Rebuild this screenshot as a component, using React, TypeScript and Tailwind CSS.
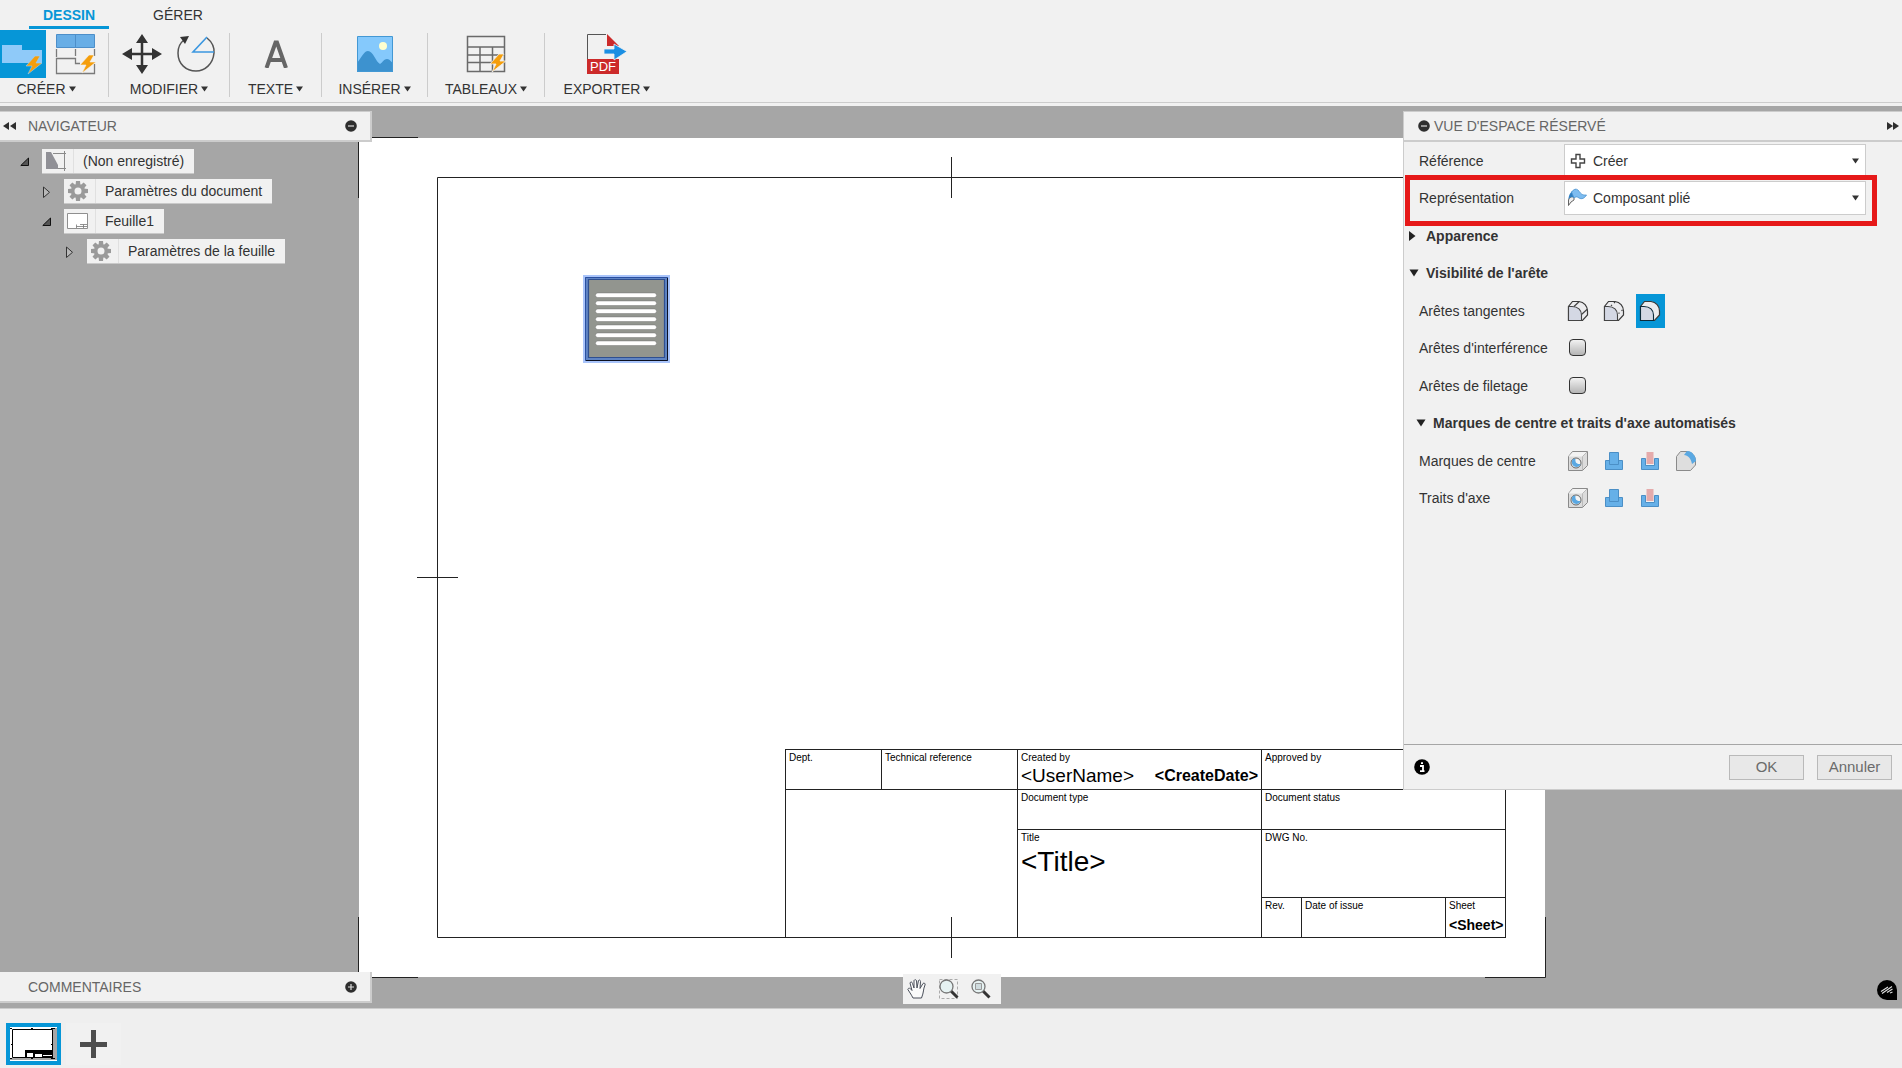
import { useState, type ReactNode } from "react";

const BOLT = "M9 0L0 10H6L2 18L16 7H10L14 0Z";

function CreateViewIcon() {
  return (
    <svg width="46" height="48" viewBox="0 0 46 48" aria-hidden="true">
      <path d="M2 15H22V20H42V33H2Z" fill="#8fcaf9" />
      <path d={BOLT} transform="translate(26 26)" fill="#f59e0b" stroke="#9fd0f5" strokeWidth="0.6" />
    </svg>
  );
}

function MultiViewIcon() {
  return (
    <svg width="42" height="42" viewBox="0 0 42 42" aria-hidden="true">
      <path d="M2.5 1.5H40.5V14.5H2.5Z" fill="#68aee6" stroke="#4d8fc9" />
      <path d="M21.5 2V14" stroke="#4d8fc9" />
      <g fill="none" stroke="#7a7a7a" strokeWidth="1.3">
        <path d="M2.500 16V24M21.500 16V23M40.500 16V23" />
        <path d="M26 30.500H21.500V25.500H2.500V40.500H40.500V31" />
      </g>
      <path d={BOLT} transform="translate(26 22)" fill="#f59e0b" stroke="#f1f1f1" strokeWidth="0.6" />
    </svg>
  );
}

function MoveIcon() {
  return (
    <svg width="40" height="40" viewBox="0 0 40 40" aria-hidden="true">
      <path d="M20 6V34M6 20H34" stroke="#333" strokeWidth="2.500" />
      <path d="M20 0L26 9H14ZM20 40L26 31H14ZM0 20L10 14V26ZM40 20L30 14V26Z" fill="#333" />
    </svg>
  );
}

function RotateIcon() {
  return (
    <svg width="40" height="40" viewBox="0 0 40 40" aria-hidden="true">
      <path d="M31 4C36 8 38.500 13 38 19C37 30 29 37 20 37C10 37 2 30 2 19C2 13 4 9 8 6" fill="none" stroke="#555" strokeWidth="1.500" />
      <path d="M4 3L13 2L9 10Z" fill="#333" />
      <path d="M31 3L17 18H38" fill="none" stroke="#3b97e0" strokeWidth="1.600" />
    </svg>
  );
}

function LetterIcon() {
  return (
    <svg width="24" height="28" viewBox="0 0 24 28" aria-hidden="true">
      <path d="M2.500 28L11.500 2.500H13L22 28M6 20H19" fill="none" stroke="#666" strokeWidth="4" />
    </svg>
  );
}

function ImageIcon() {
  return (
    <svg width="38" height="38" viewBox="0 0 38 38" aria-hidden="true">
      <path d="M1.500 1.500H36.500V36.500H1.500Z" fill="#85c9fc" />
      <path d="M1 28C6 22 8 16 12 16C17 16 20 27 24 29C27 27 28 24 31 24C34 24 35 27 37 28V37H1Z" fill="#3d92cf" />
      <circle cx="27" cy="11" r="4" fill="#ffffcf" />
      <path d="M1.500 1.500H36.500V36.500H1.500Z" fill="none" stroke="#4398d4" />
    </svg>
  );
}

function TableIcon() {
  return (
    <svg width="40" height="38" viewBox="0 0 40 38" aria-hidden="true">
      <path d="M1.500 1.500H38.500V36.500H1.500ZM1.500 12H38.500M1.500 20H38.500M1.500 27.500H38.500M14 12V36.500M26.500 12V36.500" fill="none" stroke="#6a6a6a" strokeWidth="1.500" />
      <path d={BOLT} transform="translate(24 19)" fill="#f59e0b" stroke="#f1f1f1" strokeWidth="0.8" />
    </svg>
  );
}

function PdfIcon() {
  return (
    <svg width="42" height="42" viewBox="0 0 42 42" aria-hidden="true">
      <path d="M1.500 27V1.500H20" fill="none" stroke="#555" />
      <path d="M21 1L33 13H21Z" fill="#cc2a2a" />
      <path d="M1 26H33V41H1Z" fill="#cc2a2a" />
      <text x="17" y="38" textAnchor="middle" fontFamily="Liberation Sans, sans-serif" fontSize="13" fill="#fff">PDF</text>
      <path d="M18 16H28V11L41 18.500L28 27V21H18Z" fill="#1b8fe3" stroke="#f1f1f1" strokeWidth="0.800" />
    </svg>
  );
}

function Caret() {
  return (
    <svg width="7" height="6" viewBox="0 0 7 6" aria-hidden="true">
      <path d="M0 0.500H7L3.500 5.500Z" fill="#333" />
    </svg>
  );
}

function RibbonGroup({ label, className, children }: { label: string; className: string; children: ReactNode }) {
  return (
    <div className={`flex flex-col ${className}`}>
      <div className="flex h-12 items-center justify-center gap-3.5">{children}</div>
      <button type="button" className="flex h-[22px] items-center justify-center gap-[3px] text-sm text-[#333]">
        {label}
        <Caret />
      </button>
    </div>
  );
}

function Separator() {
  return <div className="mt-[3px] h-16 w-px bg-[#cccccc]" />;
}

function ToolButton({ label, children }: { label: string; children: ReactNode }) {
  return (
    <button type="button" aria-label={label}>
      {children}
    </button>
  );
}

function Ribbon() {
  return (
    <header className="bg-[#f1f1f1] pb-[3px]">
      <nav className="flex h-[30px] gap-[29px] pl-[29px] text-sm">
        <button type="button" className="h-[29px] w-20 border-b-[3px] border-[#0696d7] pt-1 font-bold text-[#0696d7]">
          <span className="block leading-5">DESSIN</span>
        </button>
        <button type="button" className="h-[29px] w-20 border-b-[3px] border-transparent pt-1 text-[#333]">
          <span className="block leading-5">GÉRER</span>
        </button>
      </nav>
      <div className="flex h-[73px] items-start border-b border-[#cccccc]">
        <div className="flex w-[108px] flex-col">
          <div className="flex h-12 items-center gap-2">
            <button type="button" aria-label="Vue de base" className="h-12 bg-[#0696d7]">
              <CreateViewIcon />
            </button>
            <ToolButton label="Vues multiples"><MultiViewIcon /></ToolButton>
          </div>
          <button type="button" className="mr-4 flex h-[22px] items-center justify-center gap-[3px] text-sm text-[#333]">
            CRÉER
            <Caret />
          </button>
        </div>
        <Separator />
        <RibbonGroup label="MODIFIER" className="w-[120px]">
          <ToolButton label="Déplacer"><MoveIcon /></ToolButton>
          <ToolButton label="Rotation"><RotateIcon /></ToolButton>
        </RibbonGroup>
        <Separator />
        <RibbonGroup label="TEXTE" className="w-[91px]">
          <ToolButton label="Texte"><LetterIcon /></ToolButton>
        </RibbonGroup>
        <Separator />
        <RibbonGroup label="INSÉRER" className="w-[105px]">
          <ToolButton label="Image"><ImageIcon /></ToolButton>
        </RibbonGroup>
        <Separator />
        <RibbonGroup label="TABLEAUX" className="w-[116px]">
          <ToolButton label="Tableau"><TableIcon /></ToolButton>
        </RibbonGroup>
        <Separator />
        <RibbonGroup label="EXPORTER" className="w-[124px]">
          <ToolButton label="PDF"><PdfIcon /></ToolButton>
        </RibbonGroup>
      </div>
    </header>
  );
}

function RoundIcon({ plus = false }: { plus?: boolean }) {
  return (
    <svg width="12" height="12" viewBox="0 0 12 12" aria-hidden="true">
      <circle cx="6" cy="6" r="5.800" fill="#2e2e2e" />
      <path d={plus ? "M3 6H9M6 3V9" : "M3 6H9"} stroke="#ddd" strokeWidth="1.200" />
    </svg>
  );
}

function DoubleArrow({ right = false }: { right?: boolean }) {
  return (
    <svg width="13" height="8" viewBox="0 0 13 8" aria-hidden="true">
      <path d={right ? "M0 0L6 4L0 8ZM6 0L12 4L6 8Z" : "M6 0L0 4L6 8ZM13 0L7 4L13 8Z"} fill="#2e2e2e" />
    </svg>
  );
}

function DocIcon() {
  return (
    <svg width="22" height="20" viewBox="0 0 22 20" aria-hidden="true">
      <path d="M1 1H6L13 14V18H1Z" fill="#909096" />
      <path d="M8 2.500H21M19.500 0V20M13 17.500H21" stroke="#8a8a8a" fill="none" />
    </svg>
  );
}

function GearIcon() {
  const teeth = [0, 45, 90, 135, 180, 225, 270, 315];
  return (
    <svg width="20" height="20" viewBox="0 0 20 20" aria-hidden="true">
      {teeth.map((a) => (
        <path key={a} d="M8 0H12L12.500 5H7.500Z" fill="#9a9a9a" transform={`rotate(${a} 10 10)`} />
      ))}
      <circle cx="10" cy="10" r="5.300" fill="none" stroke="#9a9a9a" strokeWidth="3.600" />
    </svg>
  );
}

function SheetIcon() {
  return (
    <svg width="22" height="16" viewBox="0 0 22 16" aria-hidden="true">
      <path d="M0.500 0.500H20.500V15.500H0.500Z" fill="#fff" stroke="#8f8f8f" />
      <path d="M9.500 15V11.500M9.500 13.500H20M16.500 11.500V15M13 11.500H20" stroke="#777" strokeWidth="0.8" fill="none" />
    </svg>
  );
}

function TreeArrow({ open }: { open: boolean }) {
  return (
    <svg width="10" height="12" viewBox="0 0 10 12" aria-hidden="true">
      {open ? <path d="M0.800 9.500H8.500V2Z" fill="#555" stroke="#111" /> : <path d="M1.500 1V11.500L7.500 6.300Z" fill="#b8b8b8" stroke="#333" />}
    </svg>
  );
}

function TreeRow({ open, label, indent, children }: { open: boolean; label: string; indent: string; children: ReactNode }) {
  return (
    <li className={`flex h-[25px] items-center gap-3 ${indent}`}>
      <button type="button" aria-label={open ? "Réduire" : "Développer"}>
        <TreeArrow open={open} />
      </button>
      <button type="button" className="flex h-[25px] items-stretch border-b border-[#c9c9c9] bg-[#f1f1f1] text-sm text-[#333]">
        <span className="flex w-8 items-center justify-center border-r border-[#e0e0e0] pr-1">{children}</span>
        <span className="self-center pr-2.5 pl-[9px]">{label}</span>
      </button>
    </li>
  );
}

function Navigator() {
  return (
    <aside className="relative mt-[5px] mb-[5px] flex w-[372px] flex-col justify-between self-stretch">
      <div>
        <div className="flex h-[31px] items-center border-t border-r-2 border-b-2 border-[#cccccc] bg-[#f1f1f1] pr-[13px] pl-[3px] text-sm text-[#666]">
          <button type="button" aria-label="Réduire le navigateur"><DoubleArrow /></button>
          <h2 className="ml-3 flex-1">NAVIGATEUR</h2>
          <button type="button" aria-label="Masquer"><RoundIcon /></button>
        </div>
        <ul className="mt-[7px] flex flex-col gap-[5px]">
          <TreeRow open label="(Non enregistré)" indent="pl-5"><DocIcon /></TreeRow>
          <TreeRow open={false} label="Paramètres du document" indent="pl-[42px]"><GearIcon /></TreeRow>
          <TreeRow open label="Feuille1" indent="pl-[42px]"><SheetIcon /></TreeRow>
          <TreeRow open={false} label="Paramètres de la feuille" indent="pl-[65px]"><GearIcon /></TreeRow>
        </ul>
      </div>
      <div className="flex h-[31px] items-center border-r-2 border-b-2 border-[#cccccc] bg-[#f1f1f1] pr-[13px] pl-7 text-sm text-[#666]">
        <h2 className="flex-1">COMMENTAIRES</h2>
        <button type="button" aria-label="Afficher les commentaires"><RoundIcon plus /></button>
      </div>
    </aside>
  );
}

function TitleCell({ label, className, children }: { label?: string; className: string; children?: ReactNode }) {
  return (
    <div className={`border-t border-l border-[#222] pt-0.5 pl-[3px] ${className}`}>
      {label && <div className="text-[10px] leading-3">{label}</div>}
      {children}
    </div>
  );
}

function TitleBlock() {
  return (
    <div className="absolute top-[612px] left-[427px] grid grid-cols-[96px_136px_244px_40px_144px_60px] grid-rows-[40px_40px_68px_40px] border-r border-b border-[#222] whitespace-nowrap text-black">
      <TitleCell label="Dept." className="" />
      <TitleCell label="Technical reference" className="" />
      <TitleCell label="Created by" className="">
        <div className="flex items-center justify-between pr-[3px] leading-[22px]">
          <span className="text-[19px]">&lt;UserName&gt;</span>
          <span className="text-base font-bold">&lt;CreateDate&gt;</span>
        </div>
      </TitleCell>
      <TitleCell label="Approved by" className="col-span-3" />
      <TitleCell className="col-span-2 row-span-3" />
      <TitleCell label="Document type" className="" />
      <TitleCell label="Document status" className="col-span-3" />
      <TitleCell label="Title" className="row-span-2">
        <div className="text-[28px] leading-9">&lt;Title&gt;</div>
      </TitleCell>
      <TitleCell label="DWG No." className="col-span-3" />
      <TitleCell label="Rev." className="" />
      <TitleCell label="Date of issue" className="" />
      <TitleCell label="Sheet" className="">
        <div className="text-sm leading-[26px] font-bold">&lt;Sheet&gt;</div>
      </TitleCell>
    </div>
  );
}

function VentPart() {
  const slots = [20, 28, 36, 44, 52, 60, 68];
  return (
    <svg className="absolute top-[138px] left-[225px]" width="87" height="88" viewBox="0 0 87 88" aria-hidden="true">
      <path d="M1 1H86V87H1Z" fill="#5f84c4" stroke="#a9c4fa" strokeWidth="2" />
      <path d="M2.500 2.500H84.500V85.500H2.500Z" fill="none" stroke="#2b50a0" />
      <path d="M5.500 4.500H81.500V82.500H5.500Z" fill="#92958f" stroke="#2f4f90" strokeWidth="1.200" />
      <path d="M84.500 3V85.500H3" fill="none" stroke="#0b1020" />
      {slots.map((y) => (
        <rect key={y} x="12.500" y={y - 2} width="61" height="4.500" rx="2.200" fill="#fff" stroke="#666" strokeWidth="0.400" />
      ))}
    </svg>
  );
}

function DrawingSheet() {
  return (
    <div className="absolute top-[31px] left-[358px]">
      <svg width="1188" height="841" viewBox="0 0 1188 841" aria-hidden="true">
        <path d="M1 1H1187V840H1Z" fill="#fff" />
        <g fill="none" stroke="#222" strokeWidth="1">
          <path d="M79.500 40.500H1147.500V800.500H79.500Z" />
          <path d="M0 0.500H60M0.500 0V61M0.500 780V840.500H60M1127 840.500H1187.500V780M1127 0.500H1187.500V61" />
          <path d="M593.500 20V61M593.500 780V821M59 440.500H100" />
        </g>
      </svg>
      <VentPart />
      <TitleBlock />
    </div>
  );
}

function PlusOutline() {
  return (
    <svg width="20" height="20" viewBox="0 0 20 20" aria-hidden="true">
      <path d="M8 3.500H12V8H16.500V12H12V16.500H8V12H3.500V8H8Z" fill="#fff" stroke="#444" strokeWidth="1.400" />
    </svg>
  );
}

function FoldedIcon() {
  return (
    <svg width="20" height="20" viewBox="0 0 20 20" aria-hidden="true">
      <path d="M0.500 17.500V12C1.500 9 4 8 6 9.500V12L3 14Z" fill="#eee" stroke="#555" strokeWidth="0.900" />
      <path d="M0.500 11.500C0.500 6 4 2 8 1.200L6 9.500C3.500 8 1.500 9.500 0.500 11.500Z" fill="#2f7fc2" />
      <path d="M3.500 4C6 1 8 0.500 10 2C12.500 5 13.500 7.500 18.500 7C16.500 10.500 13.500 11.500 11 10C9 8.500 8 8.500 6 10Z" fill="#7dbcf0" stroke="#4b93cf" strokeWidth="0.800" />
    </svg>
  );
}

function SelectField({ id, option, icon }: { id: string; option: string; icon: ReactNode }) {
  return (
    <div className="relative mr-9 flex h-[34px] flex-1 items-center">
      <span className="pointer-events-none absolute left-1">{icon}</span>
      <select id={id} className="h-full w-full appearance-none rounded-none border border-[#cccccc] bg-white pl-7 text-sm text-[#333]">
        <option>{option}</option>
      </select>
      <span className="pointer-events-none absolute right-[7px]"><Caret /></span>
    </div>
  );
}

type Tangent = "full" | "short" | "off";

function TangentIcon({ kind }: { kind: Tangent }) {
  return (
    <svg width="22" height="22" viewBox="0 0 22 22" aria-hidden="true">
      <path d="M1.500 20.500V6.500L5.500 1.500H12C17 2 20.500 6 20.500 11V15L15.500 20.500Z" fill="#ececee" stroke="#3a3a3a" strokeWidth="1.200" />
      <path d="M1.500 20.500V6.500H5C11 6.500 14.500 10 14.500 15V20.500Z" fill="#d4d8e4" stroke={kind === "off" ? "#0c2a3a" : "#444"} strokeWidth="1.100" />
      {kind === "full" && <path d="M7 6.500L12 1.800M14.500 14.500L20.500 9" stroke="#444" strokeWidth="1.200" />}
      {kind === "short" && <path d="M8 5.800L9 5M11 3L12 2M15.500 13.500L16.500 12.800M18.500 10.800L19.500 10" stroke="#444" strokeWidth="1.300" />}
    </svg>
  );
}

function HoleIcon() {
  return (
    <svg width="22" height="22" viewBox="0 0 22 22" aria-hidden="true">
      <path d="M1.500 6.500L5.500 1.500H20.500V15.500L15.500 20.500H1.500Z" fill="#dcdcdc" stroke="#8a8a8a" />
      <path d="M2 6L6 2H20L15.500 6.500H2Z" fill="#f3f3f3" />
      <path d="M15.500 6.500V20M15.500 6.500L20 2" stroke="#bbb" />
      <circle cx="9" cy="13" r="5" fill="#f4f4f4" stroke="#666" />
      <path d="M5.500 9.500C4 13 5.500 17 9.500 17C11.500 17 13 16 13.500 14C9 14.500 8 11.500 8.500 9C7.500 8.500 6.500 8.500 5.500 9.500Z" fill="#5aa8e2" />
    </svg>
  );
}

function BossIcon() {
  return (
    <svg width="22" height="22" viewBox="0 0 22 22" aria-hidden="true">
      <path d="M6.500 2.500H15.500V10.500H19.500V19.500H2.500V10.500H6.500Z" fill="#66b0e8" stroke="#4b8fc6" />
      <path d="M6.500 10V14.500H15.500V10" fill="none" stroke="#4b8fc6" />
    </svg>
  );
}

function PocketIcon() {
  return (
    <svg width="22" height="22" viewBox="0 0 22 22" aria-hidden="true">
      <path d="M2.500 8.500H6.500V15.500H15.500V8.500H19.500V19.500H2.500Z" fill="#66b0e8" stroke="#4b8fc6" />
      <path d="M7.500 2H14.500V14H7.500Z" fill="#e5abab" />
    </svg>
  );
}

function FilletIcon() {
  return (
    <svg width="22" height="22" viewBox="0 0 22 22" aria-hidden="true">
      <path d="M1.500 20.500V6.500L5.500 1.500H12C17 2 20.500 6 20.500 11V15L15.500 20.500Z" fill="#dedede" stroke="#8a8a8a" />
      <path d="M9 5L12 1C17 1 21 6 21 11L17 14C16 8 13 5.500 9 5Z" fill="#5aa8e2" />
    </svg>
  );
}

function IconButton({ label, active = false, onClick, children }: { label: string; active?: boolean; onClick?: () => void; children: ReactNode }) {
  return (
    <button
      type="button"
      aria-label={label}
      aria-pressed={active}
      onClick={onClick}
      className={`flex h-[34px] w-[29px] items-center justify-center pr-px ${active ? "bg-[#0696d7]" : ""}`}
    >
      {children}
    </button>
  );
}

function Row({ label, htmlFor, children }: { label: string; htmlFor?: string; children: ReactNode }) {
  return (
    <div className="relative flex h-[37px] items-center pl-[15px] even:mb-px">
      {htmlFor ? (
        <label htmlFor={htmlFor} className="w-[145px]">{label}</label>
      ) : (
        <span className="w-[145px]">{label}</span>
      )}
      {children}
    </div>
  );
}

function SectionHead({ label, open, className }: { label: string; open: boolean; className: string }) {
  return (
    <button type="button" aria-expanded={open} className={`flex h-[37px] items-center gap-[7px] text-left font-bold even:mb-px ${className}`}>
      <svg width="10" height="10" viewBox="0 0 10 10" aria-hidden="true">
        <path d={open ? "M0.500 1.500H9.500L5 8.500Z" : "M0 0L6.500 5L0 10Z"} fill="#222" />
      </svg>
      {label}
    </button>
  );
}

function EdgeCheck({ id }: { id: string }) {
  return (
    <input
      id={id}
      type="checkbox"
      className="ml-[5px] size-[17px] appearance-none rounded-[4px] border border-[#333] bg-linear-to-b from-[#f2f2f2] to-[#b5b5b5] checked:from-[#0696d7] checked:to-[#0696d7]"
    />
  );
}

function ViewPanel() {
  const [tangent, setTangent] = useState<Tangent>("off");
  const kinds: { kind: Tangent; label: string }[] = [
    { kind: "full", label: "Pleine longueur" },
    { kind: "short", label: "Raccourcies" },
    { kind: "off", label: "Désactivées" },
  ];
  return (
    <section className="relative mt-[5px] mb-[218px] flex w-[499px] flex-col border-y border-l border-[#cccccc] bg-[#f1f1f1] text-sm text-[#333]">
      <div className="flex h-[30px] items-center border-b-2 border-[#cccccc] pr-0.5 pl-3.5 text-[#666]">
        <button type="button" aria-label="Réduire"><RoundIcon /></button>
        <h2 className="ml-1 flex-1">VUE D'ESPACE RÉSERVÉ</h2>
        <button type="button" aria-label="Masquer le panneau"><DoubleArrow right /></button>
      </div>
      <div className="flex flex-1 flex-col">
        <Row label="Référence" htmlFor="reference">
          <SelectField id="reference" option="Créer" icon={<PlusOutline />} />
        </Row>
        <Row label="Représentation" htmlFor="representation">
          <SelectField id="representation" option="Composant plié" icon={<FoldedIcon />} />
          <div className="pointer-events-none absolute -top-1 right-[25px] left-px h-[51px] border-[5px] border-[#e61919]" />
        </Row>
        <SectionHead label="Apparence" open={false} className="pl-[5px]" />
        <SectionHead label="Visibilité de l'arête" open className="pl-[5px]" />
        <Row label="Arêtes tangentes">
          <div className="flex gap-[7px]">
            {kinds.map(({ kind, label }) => (
              <IconButton key={kind} label={label} active={tangent === kind} onClick={() => setTangent(kind)}>
                <TangentIcon kind={kind} />
              </IconButton>
            ))}
          </div>
        </Row>
        <Row label="Arêtes d'interférence" htmlFor="interference"><EdgeCheck id="interference" /></Row>
        <Row label="Arêtes de filetage" htmlFor="filetage"><EdgeCheck id="filetage" /></Row>
        <SectionHead label="Marques de centre et traits d'axe automatisés" open className="pl-3" />
        <Row label="Marques de centre">
          <div className="flex gap-[7px]">
            <IconButton label="Perçages"><HoleIcon /></IconButton>
            <IconButton label="Bossages"><BossIcon /></IconButton>
            <IconButton label="Poches"><PocketIcon /></IconButton>
            <IconButton label="Congés"><FilletIcon /></IconButton>
          </div>
        </Row>
        <Row label="Traits d'axe">
          <div className="flex gap-[7px]">
            <IconButton label="Axes des perçages"><HoleIcon /></IconButton>
            <IconButton label="Axes des bossages"><BossIcon /></IconButton>
            <IconButton label="Axes des poches"><PocketIcon /></IconButton>
          </div>
        </Row>
      </div>
      <div className="flex h-[45px] items-center gap-[13px] border-t border-[#a6a6a6] pr-2.5 pl-2.5 text-[15px] text-[#6b6b6b]">
        <button type="button" aria-label="Informations" className="mr-auto">
          <svg width="16" height="16" viewBox="0 0 16 16" aria-hidden="true">
            <circle cx="8" cy="8" r="7.800" fill="#000" />
            <path d="M6 7H9V12M6 12.200H10.500M7 4.200H9" stroke="#fff" strokeWidth="1.800" fill="none" />
          </svg>
        </button>
        <button type="button" className="h-[25px] w-[75px] border border-[#b9b9b9] bg-[#e8e8e8]">OK</button>
        <button type="button" className="h-[25px] w-[75px] border border-[#b9b9b9] bg-[#e8e8e8]">Annuler</button>
      </div>
    </section>
  );
}

function Lens() {
  return (
    <g>
      <path d="M12 12L18.500 18.500" stroke="#333" strokeWidth="3" />
      <circle cx="7.500" cy="7.500" r="6.500" fill="#e6f2f2" stroke="#777" strokeWidth="1.300" />
    </g>
  );
}

function ViewTools() {
  return (
    <div className="absolute bottom-1 left-[903px] flex h-[30px] w-[98px] items-center gap-3 bg-[#f1f1f1] pl-1">
      <ToolButton label="Panoramique">
        <svg width="20" height="20" viewBox="0 0 20 20" aria-hidden="true">
          <path d="M6 19C4 15 2 12.500 0.800 10.300C1.500 8.500 3.500 9 5 11.500L3 4C3.500 2.500 5 2.500 5.500 4.500L7 9L7 1.500C7.500 0.500 9 0.500 9.500 1.500L10 9L11.500 1.500C12 0.500 13.500 1 13.500 2.500L13 9.500L16 4.500C17 3.500 18.800 4.500 18 6C16 10.500 17 13 14.500 19Z" fill="#fafafa" stroke="#4a4f5a" />
        </svg>
      </ToolButton>
      <ToolButton label="Zoom fenêtre">
        <svg width="20" height="20" viewBox="0 0 20 20" aria-hidden="true">
          <path d="M0.500 0.500H18.500V19.500H0.500Z" fill="none" stroke="#aaa" strokeDasharray="3 2" />
          <Lens />
        </svg>
      </ToolButton>
      <ToolButton label="Ajuster">
        <svg width="20" height="20" viewBox="0 0 20 20" aria-hidden="true">
          <Lens />
          <path d="M4.500 4.500H10.500V10.500H4.500Z" fill="#cfdcdf" stroke="#999" />
        </svg>
      </ToolButton>
    </div>
  );
}

function AssistantButton() {
  return (
    <button type="button" aria-label="Assistant" className="absolute right-[5px] bottom-2">
      <svg width="20" height="20" viewBox="0 0 20 20" aria-hidden="true">
        <path d="M10 0A10 10 0 0 1 20 10V20H10A10 10 0 0 1 10 0Z" fill="#000" />
        <path d="M4 11.500L11 7M5 13.500L15 6.500M10 12.500L15.500 9M13 13L15.500 12" stroke="#ddd" strokeWidth="1.100" />
      </svg>
    </button>
  );
}

function SheetBar() {
  return (
    <footer className="flex h-[60px] items-center gap-[5px] border-t border-[#cccccc] bg-[#efefef] pt-[11px] pl-1.5">
      <button type="button" aria-label="Feuille1" className="h-[42px] w-[55px] border-4 border-[#0696d7] bg-white">
        <svg width="47" height="34" viewBox="0 0 47 34" aria-hidden="true">
          <path d="M42 1H47V32H42ZM0 31H47V33H0Z" fill="#a6a6a6" />
          <path d="M2.500 2.500H42.500V30.500H2.500Z" fill="#fff" stroke="#000" />
          <path d="M15 23H43V31H15Z" fill="#000" />
          <path d="M17 26H23V30H17ZM25 27H32V30H25ZM33 28H42V29H33Z" fill="#fff" />
          <path d="M0 1.500H2M41 1.500H45M0 31.500H2M41 31.500H45M21 1.500H23M21 31.500H23M1 17.500H3M41 17.500H43" stroke="#000" />
        </svg>
      </button>
      <button type="button" aria-label="Ajouter une feuille" className="flex h-[42px] w-[55px] items-center justify-center bg-[#f1f1f1]">
        <svg width="28" height="28" viewBox="0 0 28 28" aria-hidden="true">
          <path d="M13.500 0V28M0 14.500H27" stroke="#4d4d4d" strokeWidth="5" />
        </svg>
      </button>
    </footer>
  );
}

export default function App() {
  return (
    <div className="flex min-h-screen flex-col bg-[#f1f1f1] font-['Liberation_Sans',Arial,sans-serif]">
      <Ribbon />
      <main className="relative flex flex-1 justify-between overflow-hidden bg-[#a6a6a6]">
        <DrawingSheet />
        <Navigator />
        <ViewPanel />
        <ViewTools />
        <AssistantButton />
      </main>
      <SheetBar />
    </div>
  );
}
